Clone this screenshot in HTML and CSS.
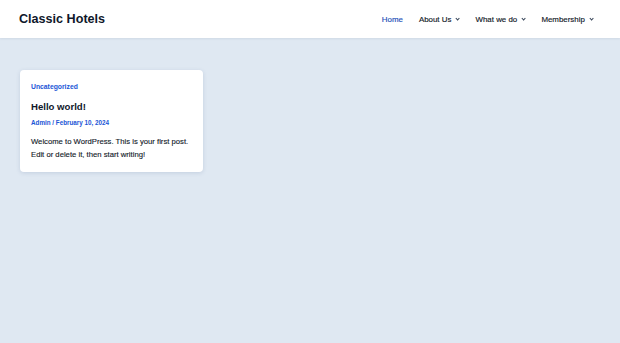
FILE: index.html
```html
<!DOCTYPE html>
<html lang="en">
<head>
  <meta charset="UTF-8" />
  <meta name="viewport" content="width=device-width, initial-scale=1.0"/>
  <title>Classic Hotels</title>
  <link rel="stylesheet" href="styles.css">
</head>
<body>

<header class="site-header">
  <div class="site-title">Classic Hotels</div>
  <nav class="main-nav">
    <a class="nav-item current" href="#">Home</a>
    <a class="nav-item" href="#">About Us <span class="chev"></span></a>
    <a class="nav-item" href="#">What we do <span class="chev"></span></a>
    <a class="nav-item" href="#">Membership <span class="chev"></span></a>
  </nav>
</header>

<main class="posts">
  <article class="post-card">
    <a class="post-cat" href="#">Uncategorized</a>
    <h2 class="post-title">Hello world!</h2>
    <div class="post-meta">Admin / February 10, 2024</div>
    <p class="post-excerpt">Welcome to WordPress. This is your first post. Edit or delete it, then start writing!</p>
  </article>
</main>

</body>
</html>
```

FILE: styles.css
```css
body {
  margin: 0;
  font-family: 'Liberation Sans', Arial, sans-serif;
  background: #dfe8f2;
  color: #1e293b;
  min-height: 343px;
}
a {
  text-decoration: none;
}
.site-header {
  height: 38px;
  background: #fff;
  display: flex;
  align-items: center;
  justify-content: space-between;
  padding: 0 27px 0 19px;
  box-shadow: 0 1px 2px rgba(30, 50, 90, 0.08);
}
.site-title {
  font-size: 12.6px;
  font-weight: bold;
  color: #0f172a;
}
.main-nav {
  display: flex;
  align-items: center;
  gap: 16px;
}
.nav-item {
  font-size: 7.9px;
  color: #111827;
  -webkit-text-stroke: 0.15px #111827;
  display: flex;
  align-items: center;
  gap: 5px;
}
.nav-item.current {
  color: #1e4fb8;
  -webkit-text-stroke: 0.15px #1e4fb8;
}
.chev {
  width: 2.2px;
  height: 2.2px;
  border-right: 1px solid #334155;
  border-bottom: 1px solid #334155;
  transform: rotate(45deg);
  margin-top: -1px;
}
.posts {
  display: grid;
  grid-template-columns: repeat(3, 1fr);
  gap: 16px;
  padding: 32px 20px;
}
.post-card {
  background: #fff;
  border-radius: 4px;
  padding: 12px 11px 11.5px;
  box-shadow: 0 1px 4px rgba(40, 70, 120, 0.15);
}
.post-cat {
  display: block;
  font-size: 6.8px;
  line-height: 10px;
  font-weight: bold;
  color: #1a55d6;
}
.post-title {
  margin: 8px 0 0;
  font-size: 9.6px;
  line-height: 14px;
  color: #0f172a;
}
.post-meta {
  margin-top: 4px;
  font-size: 6.3px;
  line-height: 10px;
  font-weight: bold;
  color: #1a55d6;
}
.post-excerpt {
  margin: 6.5px 0 0;
  font-size: 7.7px;
  line-height: 13px;
  color: #111827;
  -webkit-text-stroke: 0.12px #111827;
}
```
